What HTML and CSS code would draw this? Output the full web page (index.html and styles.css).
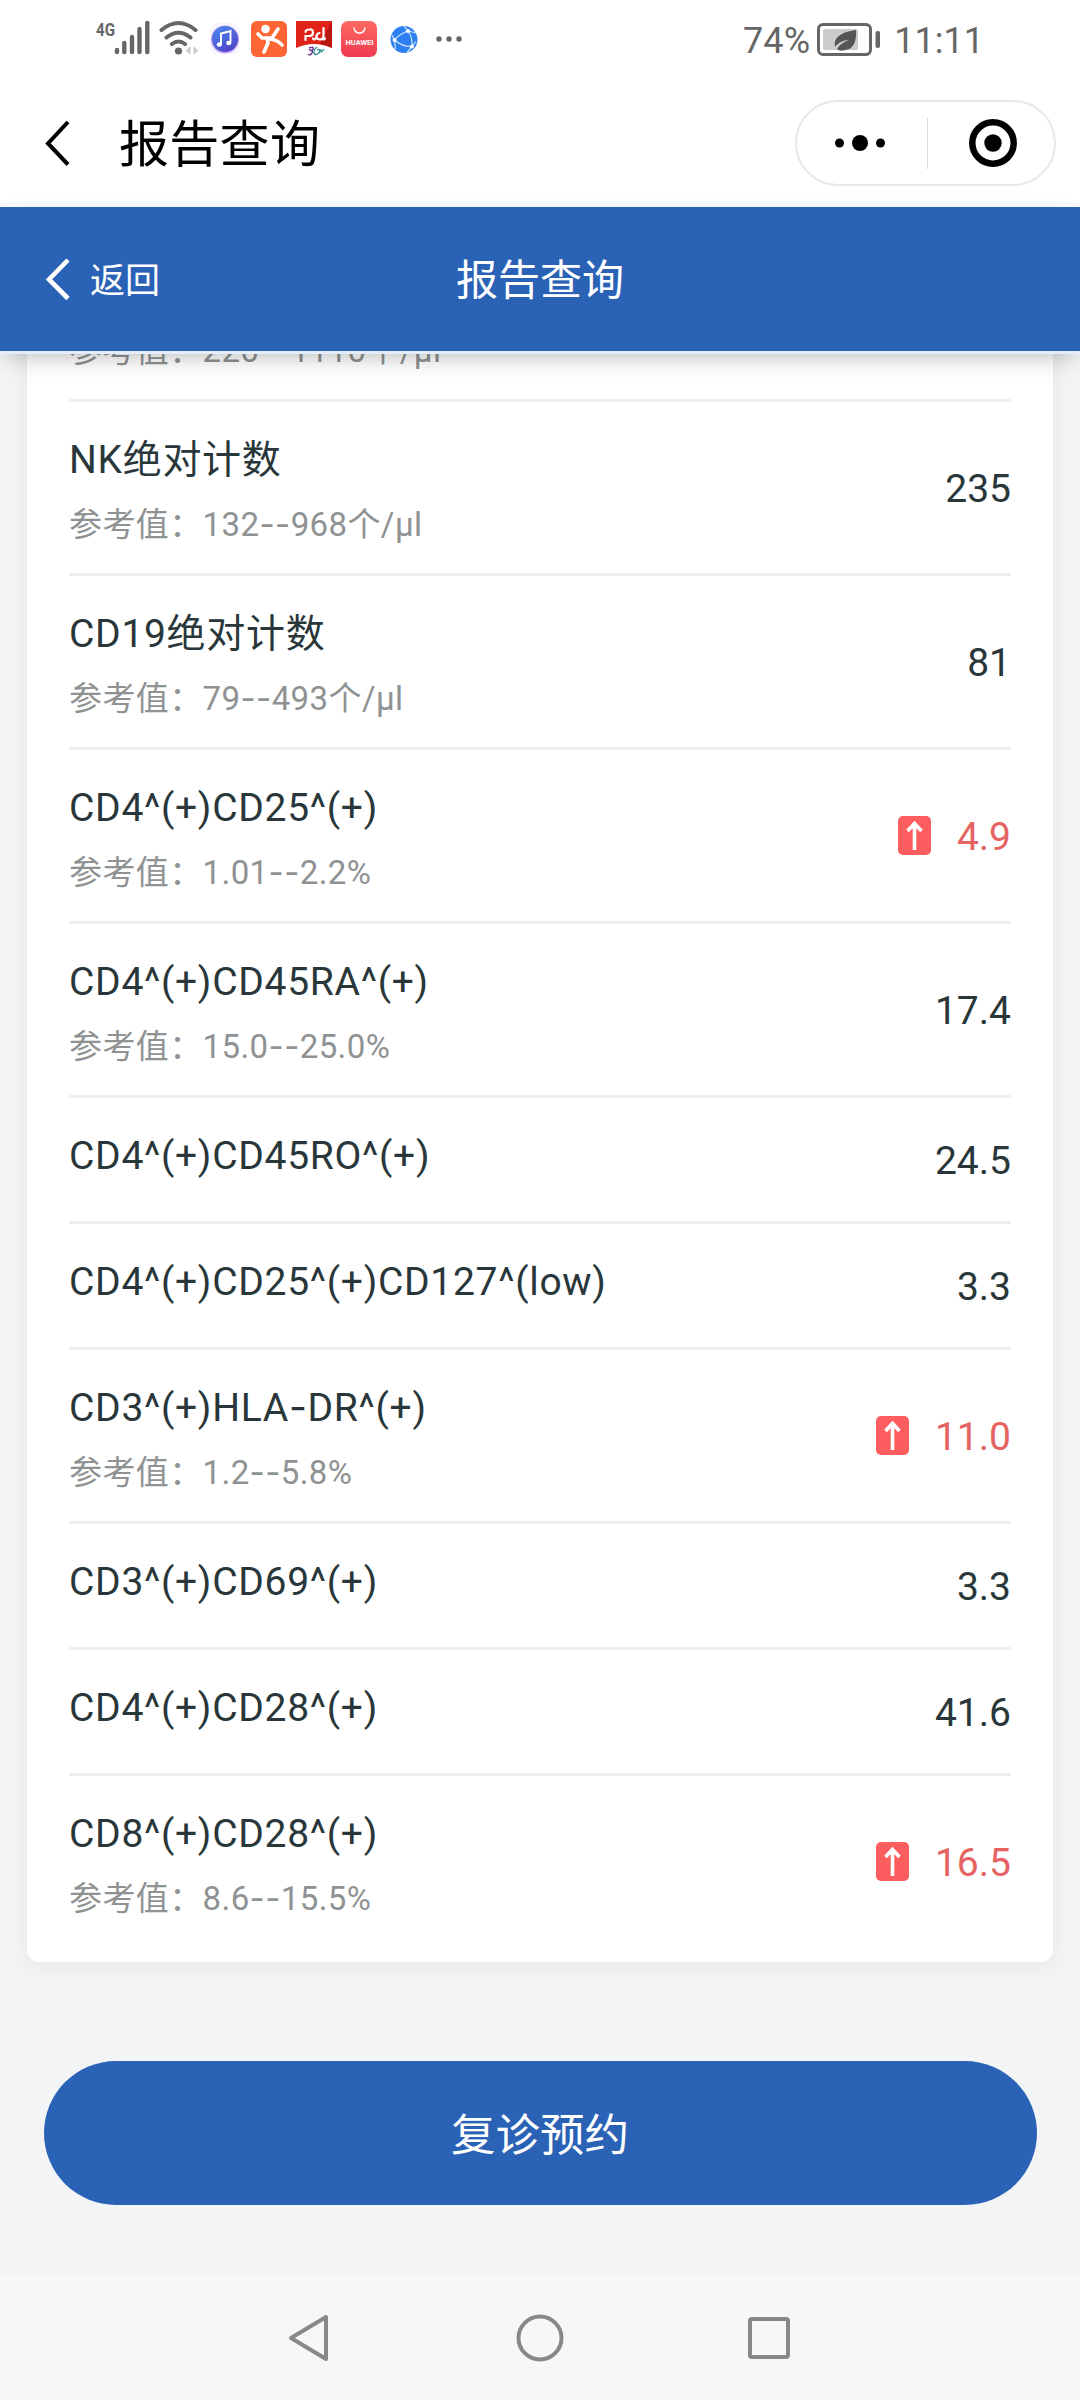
FILE: index.html
```html
<!DOCTYPE html>
<html lang="zh-CN">
<head>
  <meta charset="UTF-8">
  <meta name="viewport" content="width=device-width, initial-scale=1.0">
  <title>报告查询</title>
  <link rel="stylesheet" href="styles.css">
</head>
<body>

  <!-- 状态栏 -->
  <div class="status">
    <svg class="st-signal" width="54" height="40" viewBox="0 0 54 40">
      <text x="0" y="19" font-size="19" font-weight="700" textLength="19" lengthAdjust="spacingAndGlyphs" fill="#666">4G</text>
      <path d="M21 35v-2M28.300 35v-9M36 35V20M43.500 35V12M51.300 35V6" stroke="#666" stroke-width="4.400" stroke-linecap="round"/>
    </svg>
    <svg class="st-wifi" width="41" height="40" viewBox="0 0 41 40" fill="none">
      <path d="M2.500 13Q19.500-1 36.500 13M7.500 20.500Q19.500 11 31.500 20.500M13 27Q19.500 22 26 27" stroke="#666" stroke-width="4" stroke-linecap="round"/>
      <circle cx="19.500" cy="34" r="3.600" fill="#666"/>
      <path d="M31.500 29v9l-5-4.500zM34.500 29v9l5-4.500z" fill="#ccc"/>
    </svg>
    <svg class="st-music" width="30" height="40" viewBox="0 0 30 40">
      <defs>
        <linearGradient id="music" x1="0" y1="0" x2=".6" y2="1">
          <stop offset="0" stop-color="#4a8df0"/><stop offset="1" stop-color="#5046c8"/>
        </linearGradient>
      </defs>
      <rect y="6" width="30" height="31" rx="8" fill="#f7f5fc"/>
      <circle cx="15" cy="22.500" r="14" fill="#c9a4f5"/>
      <circle cx="15" cy="22" r="13" fill="url(#music)"/>
      <path d="M11 27.500V16.500L20.500 14v11.500" fill="none" stroke="#fff" stroke-width="1.900"/>
      <ellipse cx="9.300" cy="27.500" rx="2.600" ry="2.200" fill="#fff"/>
      <ellipse cx="18.800" cy="26" rx="2.600" ry="2.200" fill="#fff"/>
    </svg>
    <svg class="st-app" width="36" height="40" viewBox="0 0 36 40">
      <rect y="4" width="36" height="36" rx="6" fill="#fd6634"/>
      <circle cx="14.500" cy="12" r="4.300" fill="#fff"/>
      <path d="M7 17l4 4 10 0 6-9M16 21l1 5-4 9M19 22q8 1 12 6" fill="none" stroke="#fff" stroke-width="3.600" stroke-linecap="round" stroke-linejoin="round"/>
    </svg>
    <svg class="st-app" width="36" height="40" viewBox="0 0 36 40">
      <path d="M0 4h36v27Q18 23 0 31z" fill="#e2231a"/>
      <path d="M36 4v27Q30 28 24 27z" fill="#b91712"/>
      <path d="M9.500 23v-4h4q3.500 0 3.500-3.500T13.500 12.500Q9.500 12.500 9.500 15M17 21.500q1 2 3-.500M27.500 11v8q0 3.500-3.500 3.500t-3.500-3 3-3.500M27.500 22.500l1.500-1" fill="none" stroke="#fff" stroke-width="2.200" stroke-linecap="round"/>
      <path d="M13 31q5-2 4 1t-3 1q4 0 2 3t-4 1" fill="none" stroke="#7a3c96" stroke-width="1.500"/>
      <path d="M21 30q-4 3-3 6t5 0q2-5-2-3M25 32q-1 6 3 0" fill="none" stroke="#2d8f92" stroke-width="1.300"/>
    </svg>
    <svg class="st-app" width="36" height="40" viewBox="0 0 36 40">
      <defs>
        <linearGradient id="shop" x1="0" y1="0" x2="0" y2="1">
          <stop offset="0" stop-color="#ff6a62"/><stop offset="1" stop-color="#ee3a50"/>
        </linearGradient>
      </defs>
      <rect y="4" width="36" height="36" rx="7" fill="url(#shop)"/>
      <path d="M13 11q1 5 5.500 5t5.500-5" fill="none" stroke="#fff" stroke-width="1.300" stroke-linecap="round"/>
      <text x="4.500" y="27.500" font-size="6.500" font-weight="700" textLength="28" lengthAdjust="spacingAndGlyphs" fill="#fff">HUAWEI</text>
    </svg>
    <svg class="st-globe" width="28" height="40" viewBox="0 0 28 40">
      <circle cx="14" cy="22.500" r="13.500" fill="#2e80f2"/>
      <path d="M18 14Q9 17 4.500 23q8 7 17.500 6.500Q23 21 18 14zM18 14l-4-5M18 14l8 2M4.500 23L2 18M4.500 23l1 9M22 29.500l4-5M22 29.500l-5 6" fill="none" stroke="#cfe3fd" stroke-width="1.200"/>
      <circle cx="18" cy="14" r="2" fill="#fff"/><circle cx="4.500" cy="23" r="2" fill="#fff"/><circle cx="22" cy="29.500" r="2" fill="#fff"/>
    </svg>
    <svg class="st-more" width="27" height="40" viewBox="0 0 27 40" fill="#666">
      <circle cx="3" cy="22" r="2.700"/><circle cx="13" cy="22" r="2.700"/><circle cx="23" cy="22" r="2.700"/>
    </svg>

    <span class="st-battery">74%</span>
    <svg class="st-cell" width="64" height="40" viewBox="0 0 64 40">
      <rect x="1.500" y="7.500" width="52" height="30" rx="4.500" fill="none" stroke="#666" stroke-width="3"/>
      <rect x="6" y="12" width="35" height="21" rx="2" fill="#ccc"/>
      <rect x="58.500" y="14" width="4.500" height="17" rx="2" fill="#666"/>
      <path d="M39 13c1 11-3 20-11 20-3 1-6 1-8-1 3-5 7-7 12-9-6 0-11 3-14 7-2-9 5-15 21-17z" fill="#555"/>
    </svg>
    <span class="st-time">11:11</span>
  </div>

  <!-- 小程序标题栏 -->
  <div class="titlebar">
    <svg class="tb-back" width="25" height="47" viewBox="0 0 25 47">
      <path d="M23 2L3 23.500l20 21" fill="none" stroke="#000" stroke-width="4"/>
    </svg>
    <h1>报告查询</h1>
    <div class="capsule">
      <svg width="50" height="18" viewBox="0 0 50 18">
        <circle cx="4.500" cy="9" r="4.500"/><circle cx="25" cy="9" r="8"/><circle cx="45.500" cy="9" r="4.500"/>
      </svg>
      <i></i>
      <svg width="48" height="48" viewBox="0 0 48 48">
        <circle cx="24" cy="24" r="20.700" fill="none" stroke="#000" stroke-width="6.500"/>
        <circle cx="24" cy="24" r="8.700"/>
      </svg>
    </div>
  </div>

  <!-- 页面头部 -->
  <header class="header">
    <a class="back">
      <svg width="25" height="43" viewBox="0 0 25 43">
        <path d="M23 2L4 21.500l19 19" fill="none" stroke="#fff" stroke-width="4.600"/>
      </svg>
      <span>返回</span>
    </a>
    <h2>报告查询</h2>
  </header>

  <main>
    <div class="card">
      <div class="row">
        <div class="info"><p class="ref">参考值：220<span class="dash">--</span>1110个/μl</p></div>
      </div>
      <div class="row">
        <div class="info"><p class="name">NK绝对计数</p><p class="ref">参考值：132<span class="dash">--</span>968个/μl</p></div>
        <div class="value">235</div>
      </div>
      <div class="row">
        <div class="info"><p class="name">CD19绝对计数</p><p class="ref">参考值：79<span class="dash">--</span>493个/μl</p></div>
        <div class="value">81</div>
      </div>
      <div class="row">
        <div class="info"><p class="name">CD4^(+)CD25^(+)</p><p class="ref">参考值：1.01<span class="dash">--</span>2.2%</p></div>
        <div class="value high">
          <svg width="33" height="39" viewBox="0 0 33 39"><rect width="33" height="39" rx="5" fill="#fc5d5e"/><path d="M16.500 34V8M9.500 15l7-7.500 7 7.500" fill="none" stroke="#fff" stroke-width="3.600"/></svg>
          4.9
        </div>
      </div>
      <div class="row">
        <div class="info"><p class="name">CD4^(+)CD45RA^(+)</p><p class="ref">参考值：15.0<span class="dash">--</span>25.0%</p></div>
        <div class="value">17.4</div>
      </div>
      <div class="row">
        <div class="info"><p class="name">CD4^(+)CD45RO^(+)</p></div>
        <div class="value">24.5</div>
      </div>
      <div class="row">
        <div class="info"><p class="name">CD4^(+)CD25^(+)CD127^(low)</p></div>
        <div class="value">3.3</div>
      </div>
      <div class="row">
        <div class="info"><p class="name">CD3^(+)HLA<span class="dash">-</span>DR^(+)</p><p class="ref">参考值：1.2<span class="dash">--</span>5.8%</p></div>
        <div class="value high">
          <svg width="33" height="39" viewBox="0 0 33 39"><rect width="33" height="39" rx="5" fill="#fc5d5e"/><path d="M16.500 34V8M9.500 15l7-7.500 7 7.500" fill="none" stroke="#fff" stroke-width="3.600"/></svg>
          11.0
        </div>
      </div>
      <div class="row">
        <div class="info"><p class="name">CD3^(+)CD69^(+)</p></div>
        <div class="value">3.3</div>
      </div>
      <div class="row">
        <div class="info"><p class="name">CD4^(+)CD28^(+)</p></div>
        <div class="value">41.6</div>
      </div>
      <div class="row">
        <div class="info"><p class="name">CD8^(+)CD28^(+)</p><p class="ref">参考值：8.6<span class="dash">--</span>15.5%</p></div>
        <div class="value high">
          <svg width="33" height="39" viewBox="0 0 33 39"><rect width="33" height="39" rx="5" fill="#fc5d5e"/><path d="M16.500 34V8M9.500 15l7-7.500 7 7.500" fill="none" stroke="#fff" stroke-width="3.600"/></svg>
          16.5
        </div>
      </div>
    </div>

    <button class="book">复诊预约</button>
  </main>

  <!-- 系统导航键 -->
  <nav class="sysnav">
    <svg width="48" height="50" viewBox="0 0 48 50"><path d="M39 4v42L4 25z"/></svg>
    <svg width="50" height="50" viewBox="0 0 50 50"><circle cx="25" cy="25" r="21.500"/></svg>
    <svg width="48" height="50" viewBox="0 0 48 50"><rect x="5" y="6" width="38" height="38" rx="2"/></svg>
  </nav>

</body>
</html>
```
FILE: styles.css
```css
*{box-sizing:border-box;}
body{
  margin:0;height:2400px;
  display:flex;flex-direction:column;
  font-family:Roboto,"Noto Sans CJK SC",sans-serif;
  background:#f3f4f6;color:#29373a;
  overflow:hidden;
}
h1,h2,p{margin:0;font-weight:400;}
svg{display:block;flex:none;}

/* 状态栏 */
.status{height:80px;padding:17px 96px 0 96px;display:flex;align-items:flex-start;background:#fff;color:#666;}
.st-wifi{margin-left:9px;}
.st-music{margin-left:10px;}
.st-app{margin-left:9px;}
.st-music + .st-app{margin-left:11px;}
.st-globe{margin-left:13px;}
.st-more{margin-left:18px;}
.st-battery{margin-left:auto;font-size:36px;line-height:49px;letter-spacing:.2px;}
.st-cell{margin-left:7px;}
.st-time{margin-left:13px;font-size:36px;line-height:49px;}

/* 标题栏 */
.titlebar{height:127px;padding:0 24px 1px 45px;display:flex;align-items:center;background:#fff;color:#000;}
.titlebar h1{margin-left:49px;padding-top:4px;font-size:50px;line-height:70px;letter-spacing:.3px;}
.capsule{
  margin-left:auto;width:261px;height:86px;
  border:2px solid #e8e8e8;border-radius:43px;
  display:flex;align-items:center;padding:0 37px 0 38px;justify-content:space-between;
}
.capsule i{width:1px;height:51px;background:#ddd;}

/* 蓝色头部 */
.header{
  position:relative;z-index:1;
  height:147px;padding:0 45px;
  display:grid;grid-template-columns:1fr auto 1fr;align-items:center;
  background:#2a62b6;color:#fff;
  border-bottom:3px solid #e4edf9;
  box-shadow:0 8px 22px -6px rgba(0,0,0,.28);
}
.header h2{padding-top:4px;font-size:42px;line-height:60px;}
.back{display:flex;align-items:center;gap:20px;font-size:35px;line-height:50px;}
.back span{padding-top:5px;}

/* 报告列表 */
main{flex:1;margin-top:-54px;padding:0 27px;}
.card{
  background:#fff;border-radius:12px;
  padding:0 42px 15px;
  box-shadow:0 4px 22px rgba(0,0,0,.06);
}
.row{display:flex;justify-content:space-between;min-height:126px;border-bottom:3px solid #eee;}
.row:first-child{min-height:0;}
.row:first-child .info{padding-top:26px;}
.row:last-child{border-bottom:none;}
.info{padding:29px 0 23px;}
.name{font-size:39px;line-height:58px;letter-spacing:.7px;white-space:nowrap;}
.ref{margin-top:11px;font-size:33px;line-height:50px;color:#8f9292;letter-spacing:.4px;white-space:nowrap;}
.row:first-child .ref{margin-top:0;}
.dash{font-family:Inter,sans-serif;line-height:1;}
.value{display:flex;align-items:center;gap:26px;padding-top:3px;font-size:39px;line-height:58px;}
.value svg{margin-top:-4px;}
.high{color:#e56363;}

/* 预约按钮 */
.book{
  display:block;width:993px;height:144px;margin:99px auto 0;padding:0 0 4px;
  border:none;border-radius:72px;
  background:#2a62b6;color:#fff;
  font-family:inherit;font-size:44.5px;
}

/* 底部导航 */
.sysnav{
  height:124px;background:#f7f7f7;
  display:flex;justify-content:center;align-items:center;gap:180px;
}
.sysnav svg{fill:none;stroke:#888;stroke-width:4;stroke-linejoin:round;}
```
